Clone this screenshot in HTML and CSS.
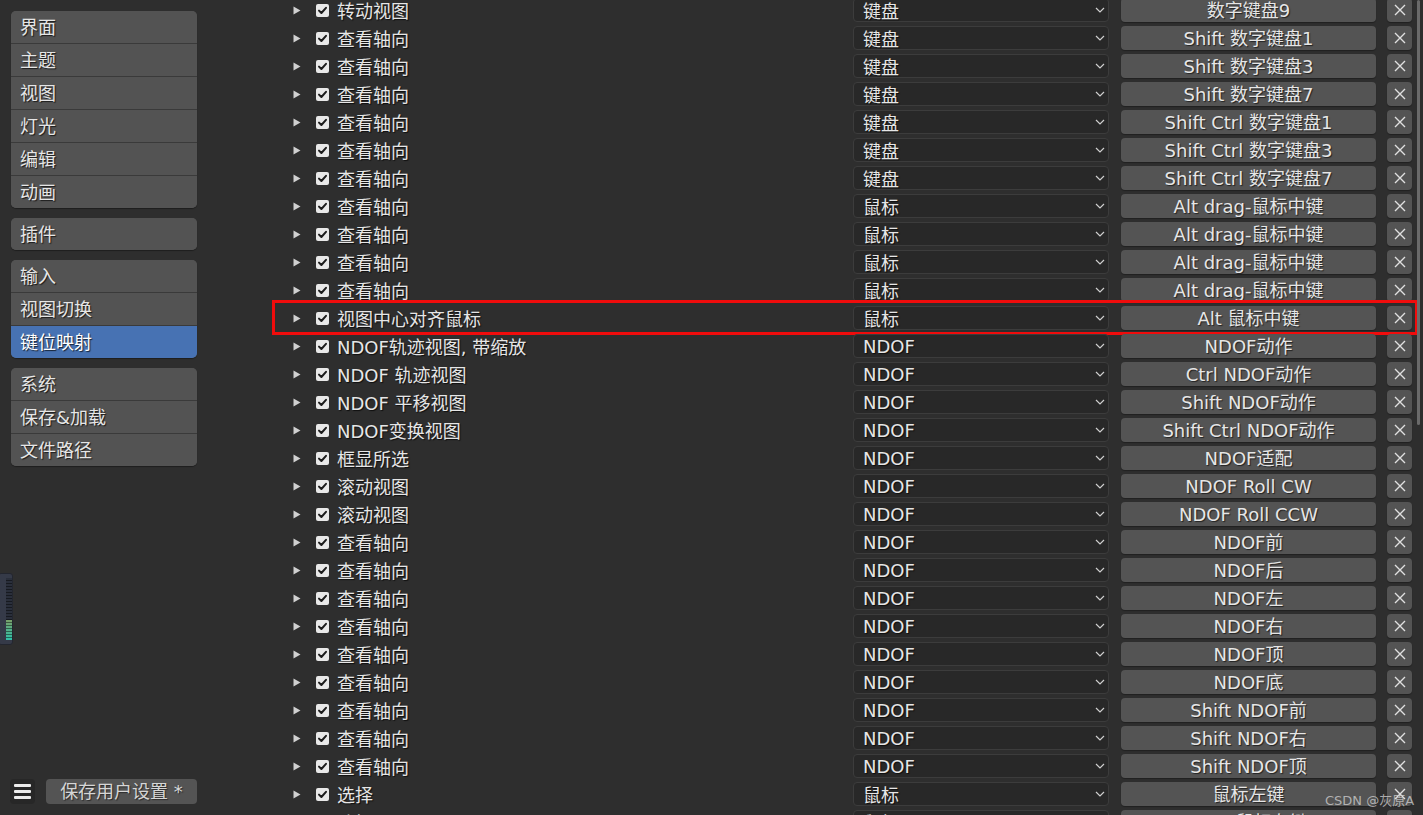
FILE: index.html
```html
<!DOCTYPE html>
<html lang="zh">
<head>
<meta charset="utf-8">
<title>键位映射</title>
<link rel="stylesheet" href="styles.css">
</head>
<body>
<div class="app">
  <aside class="sidebar">
    <div class="groups">
      <div class="group">
        <div class="nav-item">界面</div>
        <div class="nav-item">主题</div>
        <div class="nav-item">视图</div>
        <div class="nav-item">灯光</div>
        <div class="nav-item">编辑</div>
        <div class="nav-item">动画</div>
      </div>
      <div class="group">
        <div class="nav-item">插件</div>
      </div>
      <div class="group">
        <div class="nav-item">输入</div>
        <div class="nav-item">视图切换</div>
        <div class="nav-item active">键位映射</div>
      </div>
      <div class="group">
        <div class="nav-item">系统</div>
        <div class="nav-item">保存&amp;加载</div>
        <div class="nav-item">文件路径</div>
      </div>
    </div>
    <div class="bottom-bar">
      <div class="menu-btn"><span></span><span></span><span></span></div>
      <div class="save-btn">保存用户设置 *</div>
    </div>
  </aside>

  <main class="main">
    <div class="list" id="list"></div>
  </main>
</div>

<div class="meter"><div class="meter-strip"></div></div>
<div class="scrollbar"></div>
<div class="watermark">CSDN @灰原A</div>

<script src="script.js"></script>
</body>
</html>
```

FILE: script.js
```js
var rows = [
  ["转动视图", "键盘", "数字键盘9"],
  ["查看轴向", "键盘", "Shift 数字键盘1"],
  ["查看轴向", "键盘", "Shift 数字键盘3"],
  ["查看轴向", "键盘", "Shift 数字键盘7"],
  ["查看轴向", "键盘", "Shift Ctrl 数字键盘1"],
  ["查看轴向", "键盘", "Shift Ctrl 数字键盘3"],
  ["查看轴向", "键盘", "Shift Ctrl 数字键盘7"],
  ["查看轴向", "鼠标", "Alt drag-鼠标中键"],
  ["查看轴向", "鼠标", "Alt drag-鼠标中键"],
  ["查看轴向", "鼠标", "Alt drag-鼠标中键"],
  ["查看轴向", "鼠标", "Alt drag-鼠标中键"],
  ["视图中心对齐鼠标", "鼠标", "Alt 鼠标中键", true],
  ["NDOF轨迹视图, 带缩放", "NDOF", "NDOF动作"],
  ["NDOF 轨迹视图", "NDOF", "Ctrl NDOF动作"],
  ["NDOF 平移视图", "NDOF", "Shift NDOF动作"],
  ["NDOF变换视图", "NDOF", "Shift Ctrl NDOF动作"],
  ["框显所选", "NDOF", "NDOF适配"],
  ["滚动视图", "NDOF", "NDOF Roll CW"],
  ["滚动视图", "NDOF", "NDOF Roll CCW"],
  ["查看轴向", "NDOF", "NDOF前"],
  ["查看轴向", "NDOF", "NDOF后"],
  ["查看轴向", "NDOF", "NDOF左"],
  ["查看轴向", "NDOF", "NDOF右"],
  ["查看轴向", "NDOF", "NDOF顶"],
  ["查看轴向", "NDOF", "NDOF底"],
  ["查看轴向", "NDOF", "Shift NDOF前"],
  ["查看轴向", "NDOF", "Shift NDOF右"],
  ["查看轴向", "NDOF", "Shift NDOF顶"],
  ["选择", "鼠标", "鼠标左键"],
  ["选择", "鼠标", "Shift 鼠标左键"]
];

var arrowSvg = '<svg class="arrow" width="8" height="9" viewBox="0 0 8 9"><polygon points="0.5,0.5 7.5,4.5 0.5,8.5" fill="#d0d0d0"/></svg>';
var checkSvg = '<svg class="check" width="13" height="13" viewBox="0 0 13 13"><rect x="0" y="0" width="13" height="13" rx="2" fill="#e8e8e8"/><path d="M3 6.6 L5.4 9 L10 3.8" fill="none" stroke="#1c1c1c" stroke-width="2" stroke-linecap="round" stroke-linejoin="round"/></svg>';
var chevSvg = '<svg class="chev" width="10" height="6" viewBox="0 0 10 6"><path d="M1 1 L5 5 L9 1" fill="none" stroke="#cfcfcf" stroke-width="1.2"/></svg>';
var xSvg = '<svg width="12" height="12" viewBox="0 0 12 12"><path d="M1 1 L11 11 M11 1 L1 11" stroke="#e0e0e0" stroke-width="1.4"/></svg>';

var list = document.getElementById("list");
var html = "";
rows.forEach(function (r) {
  html += '<div class="row">' +
    (r[3] ? '<div class="highlight"></div>' : '') +
    '<div class="expander">' + arrowSvg + '</div>' +
    '<div class="checkbox">' + checkSvg + '</div>' +
    '<div class="name">' + r[0] + '</div>' +
    '<div class="dropdown"><span>' + r[1] + '</span>' + chevSvg + '</div>' +
    '<div class="key">' + r[2] + '</div>' +
    '<div class="remove">' + xSvg + '</div>' +
    '</div>';
});
list.innerHTML = html;
```

FILE: styles.css
```css
* { box-sizing: border-box; }

html, body {
  margin: 0;
  padding: 0;
  width: 1423px;
  height: 815px;
  overflow: hidden;
  background: #2e2e2e;
  font-family: "DejaVu Sans", "Noto Sans CJK SC", sans-serif;
  font-size: 18px;
  color: #e6e6e6;
}

.app {
  display: flex;
  height: 815px;
}

.sidebar {
  width: 207px;
  flex: none;
  display: flex;
  flex-direction: column;
  justify-content: space-between;
  padding: 11px 10px 11px 11px;
}

.groups {
  display: flex;
  flex-direction: column;
  gap: 10px;
}

.group {
  background: #535353;
  border-radius: 5px;
  overflow: hidden;
  display: flex;
  flex-direction: column;
  box-shadow: 0 1px 1px rgba(0,0,0,0.35);
}

.nav-item {
  height: 32px;
  line-height: 33px;
  padding-left: 9px;
  background: #535353;
  text-shadow: 1px 1px 1px rgba(0,0,0,0.7);
  white-space: nowrap;
}

.group .nav-item + .nav-item {
  height: 33px;
  border-top: 1px solid #3a3a3a;
}

.nav-item.active {
  background: #4772b3;
  color: #fff;
}

.bottom-bar {
  display: flex;
  align-items: center;
  gap: 11px;
  height: 25px;
  margin-left: -1px;
}

.menu-btn {
  width: 25px;
  height: 25px;
  background: #272727;
  border-radius: 4px;
  display: flex;
  flex-direction: column;
  justify-content: center;
  align-items: center;
  gap: 3px;
}

.menu-btn span {
  display: block;
  width: 17px;
  height: 3px;
  background: #ececec;
  border-radius: 1px;
}

.save-btn {
  flex: 1;
  height: 25px;
  line-height: 26px;
  background: #545454;
  border-radius: 4px;
  text-align: center;
  color: #d6d6d6;
  text-shadow: 1px 1px 1px rgba(0,0,0,0.5);
}

.main {
  flex: 1;
  padding-left: 86px;
  overflow: hidden;
}

.list {
  width: 1119px;
  margin-top: -4px;
  display: flex;
  flex-direction: column;
}

.row {
  position: relative;
  height: 28px;
  display: flex;
  align-items: center;
  flex: none;
}

.expander {
  width: 23px;
  display: flex;
  align-items: center;
}

.arrow { display: block; }

.checkbox {
  width: 21px;
  display: flex;
  align-items: center;
}

.check { display: block; }

.name {
  width: 516px;
  white-space: nowrap;
  text-shadow: 1px 1px 1px rgba(0,0,0,0.7);
  color: #e6e6e6;
}

.dropdown {
  width: 256px;
  height: 24px;
  background: #282828;
  border: 1px solid #3c3c3c;
  border-radius: 4px;
  display: flex;
  align-items: center;
  justify-content: space-between;
  padding: 0 3px 0 9px;
  margin-right: 12px;
  white-space: nowrap;
}

.dropdown span {
  text-shadow: 1px 1px 1px rgba(0,0,0,0.7);
}

.chev { display: block; }

.key {
  width: 255px;
  height: 24px;
  line-height: 26px;
  background: #545454;
  border-radius: 4px;
  text-align: center;
  white-space: nowrap;
  margin-right: 11px;
  text-shadow: 1px 1px 1px rgba(0,0,0,0.6);
  box-shadow: 0 1px 1px rgba(0,0,0,0.3);
}

.remove {
  width: 25px;
  height: 24px;
  background: #545454;
  border-radius: 4px;
  display: flex;
  align-items: center;
  justify-content: center;
  box-shadow: 0 1px 1px rgba(0,0,0,0.3);
}

.highlight {
  position: absolute;
  left: -21px;
  right: -6px;
  top: -4px;
  bottom: -3px;
  border: 3px solid #f00c0c;
  pointer-events: none;
}

.meter {
  position: absolute;
  left: -2px;
  top: 573px;
  width: 15px;
  height: 72px;
  background: #353a48;
  border: 1px solid #23262f;
  border-radius: 3px;
  padding: 4px 3px;
}

.meter-strip {
  width: 6px;
  height: 62px;
  margin-left: 4px;
  background:
    repeating-linear-gradient(to bottom, transparent 0 2px, rgba(0,0,0,0.45) 2px 3px),
    linear-gradient(to bottom, #2a2f3b 0 42px, #7aa06a 42px, #52b08a 52px, #2fc0a8 62px);
}

.scrollbar {
  position: absolute;
  left: 1417px;
  top: 0;
  width: 3px;
  height: 425px;
  background: #6a6a6a;
  border-radius: 2px;
}

.watermark {
  position: absolute;
  left: 1325px;
  top: 790px;
  font-family: "DejaVu Sans", "Noto Sans CJK SC", sans-serif;
  font-size: 13px;
  color: rgba(210,210,210,0.75);
  white-space: nowrap;
}
```
